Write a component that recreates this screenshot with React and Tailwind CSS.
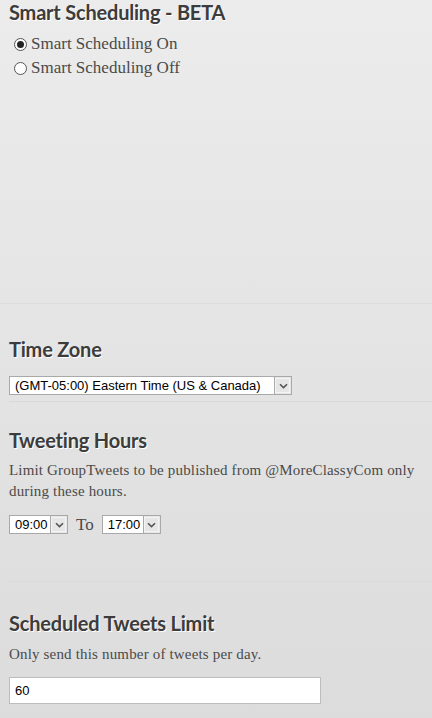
import React from "react";

function Chevron() {
  return (
    <svg width="9" height="6" viewBox="0 0 9 6" className="block">
      <path d="M1 1.2 L4.5 4.6 L8 1.2" fill="none" stroke="#555" strokeWidth="1.6" />
    </svg>
  );
}

function FakeSelect({ value, width }) {
  return (
    <div
      className={`flex h-[19px] items-stretch border border-[#a9a9a9] bg-white ${width}`}
      style={{ fontFamily: "Arial, 'Liberation Sans', sans-serif" }}
    >
      <div className="flex flex-1 items-center pl-[5px] text-[13px] leading-none text-black whitespace-nowrap overflow-hidden">
        {value}
      </div>
      <div className="flex w-[17px] items-center justify-center border-l border-[#a9a9a9] bg-[#e6e6e6] outline outline-1 outline-[#f4f4f4] -outline-offset-2">
        <Chevron />
      </div>
    </div>
  );
}

function Radio({ checked, label }) {
  return (
    <label className="flex h-[24px] items-center">
      <span className="ml-[5px] mr-[4px] flex h-[13px] w-[13px] items-center justify-center rounded-full border border-[#555] bg-white">
        {checked && <span className="h-[7px] w-[7px] rounded-full bg-[#222]" />}
      </span>
      <span className="text-[17px]">{label}</span>
    </label>
  );
}

const heading =
  "text-[20px] leading-[24px] font-bold tracking-[-0.2px] text-[#3c3c3c] [text-shadow:1px_1px_0_#fff] font-['Lato',sans-serif]";

export default function App() {
  return (
    <div
      className="min-h-[718px] w-[432px] bg-gradient-to-b from-[#ececec] to-[#dcdcdc] text-[#4a4a4a] font-['Liberation_Serif',serif] text-[16px]"
    >
      <section className="h-[304px] border-b border-[#dcdcdc] pl-[9px]">
        <h1 className={heading}>Smart Scheduling - BETA</h1>
        <div className="mt-[8px]">
          <Radio checked label="Smart Scheduling On" />
          <Radio label="Smart Scheduling Off" />
        </div>
      </section>

      <section className="ml-[9px] h-[98px] border-b border-[#d9d9d9] pt-[33px]">
        <h2 className={heading}>Time Zone</h2>
        <div className="mt-[15px]">
          <FakeSelect value="(GMT-05:00) Eastern Time (US & Canada)" width="w-[283px]" />
        </div>
      </section>

      <section className="ml-[9px] h-[180px] border-b border-[#dadada] pt-[26px]">
        <h2 className={heading}>Tweeting Hours</h2>
        <p className="mt-[8px] pr-[10px] text-[15px] leading-[21px] tracking-[0.17px]">
          Limit GroupTweets to be published from @MoreClassyCom only during these hours.
        </p>
        <div className="mt-[10px] flex items-center">
          <FakeSelect value="09:00" width="w-[59px]" />
          <span className="mx-[8px] text-[17px]">To</span>
          <FakeSelect value="17:00" width="w-[59px]" />
        </div>
      </section>

      <section className="ml-[9px] pt-[29px]">
        <h2 className={heading}>Scheduled Tweets Limit</h2>
        <p className="mt-[9px] text-[15px] leading-[21px] tracking-[0.17px]">Only send this number of tweets per day.</p>
        <input
          readOnly
          value="60"
          className="mt-[12px] h-[27px] w-[312px] border border-[#bdbdbd] bg-white px-[5px] text-[13px] text-black outline-none"
          style={{ fontFamily: "Arial, 'Liberation Sans', sans-serif" }}
        />
      </section>
    </div>
  );
}
